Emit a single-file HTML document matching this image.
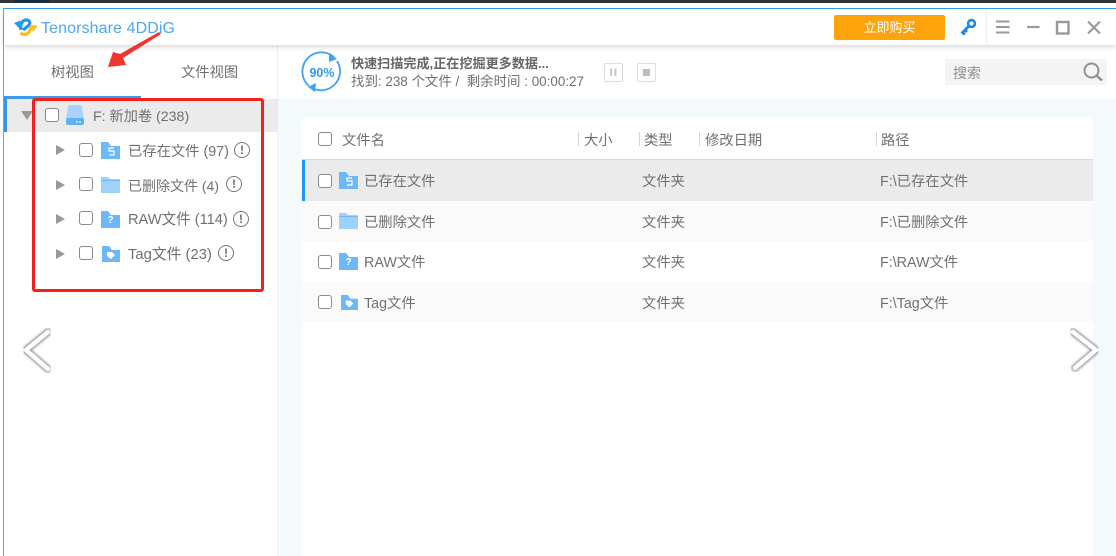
<!DOCTYPE html>
<html><head><meta charset="utf-8">
<style>
html,body{margin:0;padding:0;background:#fff}
#r{position:relative;width:1116px;height:556px;overflow:hidden;background:#fff;font-family:"Liberation Sans","Noto Sans CJK SC",sans-serif;color:#666}
.a{position:absolute}
.t{position:absolute;white-space:nowrap;font-size:14.3px;line-height:20px;color:#707070;margin-top:1px}
.cb{position:absolute;width:12px;height:12px;border:1.5px solid #8a8a8a;border-radius:3px;background:#fff}
.tri{position:absolute;width:0;height:0;border-left:9px solid #999;border-top:5px solid transparent;border-bottom:5px solid transparent}
.ex{position:absolute;width:14px;height:14px;border:1.5px solid #777;border-radius:50%;text-align:center;font-size:12px;font-weight:bold;line-height:14px;color:#6e6e6e}
</style></head><body>
<div id="r">
<svg width="0" height="0" style="position:absolute"><filter id="b"><feGaussianBlur stdDeviation="1.3"/></filter></svg>
<div class="a" style="left:0;top:0;width:1116px;height:3px;background:#333"></div>
<div class="a" style="left:14px;top:0;width:36px;height:3px;background:#1d2c3a"></div>
<div class="a" style="left:3px;top:8px;width:1113px;height:548px;background:#f4fafb"></div>
<div class="a" style="left:3px;top:8px;width:1113px;height:1.5px;background:#3b9de8"></div>
<div class="a" style="left:3px;top:8px;width:1px;height:548px;background:#66a6dc"></div>
<!-- title bar -->
<div class="a" style="left:4px;top:9px;width:1112px;height:36px;background:#fff;box-shadow:0 2px 5px rgba(0,0,0,.16);z-index:3"></div>
<svg class="a" style="left:13px;top:15px;z-index:4" width="24" height="24" viewBox="0 0 24 24">
<path d="M1 8L7.5 5.5L7 14Z" fill="#1e9af0"/>
<path d="M8 15C7 10 9 5 13 5C17 5 18 8 15 11C13 13 11 14 10 15" fill="none" stroke="#1e9af0" stroke-width="3.2"/>
<path d="M7.5 18C10 20 14 20 16 17C17.5 15 18 13 19 11" fill="none" stroke="#fbbf24" stroke-width="3.4"/>
<path d="M17 10L25 10.5L20 17Z" fill="#fbbf24"/></svg>
<div class="t" style="left:41px;top:18px;font-size:16px;color:#4aa8f2;z-index:4;letter-spacing:.1px">Tenorshare 4DDiG</div>
<div class="a" style="left:834px;top:15px;width:111px;height:25px;background:#ffa30d;border-radius:2px;z-index:4;color:#fff;font-size:13px;line-height:25px;text-align:center">立即购买</div>
<svg class="a" style="left:958px;top:17px;z-index:4" width="20" height="20" viewBox="0 0 20 20"><circle cx="13.5" cy="6.5" r="3.4" fill="none" stroke="#1e88e5" stroke-width="2.6"/><path d="M11 9L3.5 16.5M4.5 15.5L6.8 17.6M7 13L9 15" stroke="#1e88e5" stroke-width="2.8" fill="none"/></svg>
<div class="a" style="left:986px;top:9px;width:1px;height:36px;background:#eee;z-index:4"></div>
<svg class="a" style="left:994px;top:18px;z-index:4" width="110" height="18" viewBox="0 0 110 18">
<path d="M2 3.5H15.5M2 9H15.5M2 14.5H15.5" stroke="#999" stroke-width="2"/>
<path d="M33 9H45.5" stroke="#999" stroke-width="2.2"/>
<rect x="63" y="4" width="11.5" height="11.5" fill="none" stroke="#999" stroke-width="2.4"/>
<path d="M94 3.5L106 15.5M106 3.5L94 15.5" stroke="#999" stroke-width="2.2"/></svg>
<!-- sidebar -->
<div class="a" style="left:4px;top:45px;width:274px;height:511px;background:#fff"></div>
<div class="a" style="left:277px;top:45px;width:1px;height:511px;background:#efefef"></div>
<div class="t" style="left:51px;top:62px">树视图</div>
<div class="t" style="left:181px;top:62px">文件视图</div>
<div class="a" style="left:4px;top:96px;width:137px;height:3px;background:#3a9cf0"></div>
<div class="a" style="left:4px;top:99px;width:274px;height:33px;background:#ebebeb"></div>
<div class="a" style="left:4px;top:99px;width:3px;height:33px;background:#2f95ee"></div>
<div class="a" style="left:21px;top:111px;border-top:9px solid #999;border-left:6px solid transparent;border-right:6px solid transparent"></div>
<div class="cb" style="left:45px;top:108px"></div>
<svg class="a" style="left:65px;top:104px" width="20" height="22" viewBox="0 0 20 22"><path d="M3 3Q3 1 5 1H15Q17 1 17 3L19 15H1Z" fill="#a8d4fb"/><rect x="1" y="14" width="18" height="7" rx="2" fill="#5eb1f5"/><circle cx="12" cy="18" r=".9" fill="#fff"/><circle cx="15" cy="18" r=".9" fill="#fff"/></svg>
<div class="t" style="left:93px;top:106px;font-size:14.2px">F: 新加卷 (238)</div>

<div class="tri" style="left:56px;top:145px"></div><div class="cb" style="left:79px;top:143px"></div>
<svg class="a" style="left:101px;top:142px" width="19" height="17" viewBox="0 0 19 17"><path d="M0 0H7L10 4H19V17H0Z" fill="#6cb8f8"/><path d="M13 6H8V9H13V13H8" stroke="#fff" stroke-width="1.2" fill="none"/></svg>
<div class="t" style="left:128px;top:141px">已存在文件 (97)</div><div class="ex" style="left:234px;top:142px">!</div>

<div class="tri" style="left:56px;top:180px"></div><div class="cb" style="left:79px;top:177px"></div>
<svg class="a" style="left:101px;top:177px" width="19" height="16" viewBox="0 0 19 16"><path d="M0 0H7L9 2H19V16H0Z" fill="#9ed2fb"/><path d="M0 3H19V4H0Z" fill="#6cb8f8"/></svg>
<div class="t" style="left:128px;top:175px;font-size:14px">已删除文件 (4)</div><div class="ex" style="left:226px;top:176px">!</div>

<div class="tri" style="left:56px;top:214px"></div><div class="cb" style="left:79px;top:211px"></div>
<svg class="a" style="left:101px;top:211px" width="19" height="17" viewBox="0 0 19 17"><path d="M0 0H7L10 4H19V17H0Z" fill="#6cb8f8"/></svg>
<div class="a" style="left:101px;top:213px;width:19px;text-align:center;color:#fff;font-size:10px;line-height:15px;font-weight:bold">?</div>
<div class="t" style="left:128px;top:209px;font-size:14.6px">RAW文件 (114)</div><div class="ex" style="left:233px;top:211px">!</div>

<div class="tri" style="left:56px;top:249px"></div><div class="cb" style="left:79px;top:246px"></div>
<svg class="a" style="left:102px;top:246px" width="18" height="16" viewBox="0 0 18 16"><path d="M0 0H7L10 4H18V16H0Z" fill="#6cb8f8"/><path d="M5 6H10L13 9L9 13L5 10Z" fill="#fff"/></svg>
<div class="t" style="left:128px;top:244px;font-size:14.8px">Tag文件 (23)</div><div class="ex" style="left:218px;top:245px">!</div>

<!-- red box + arrow -->
<div class="a" style="left:32px;top:98px;width:226px;height:188px;border:3px solid #f5201a;border-radius:3px"></div>
<svg class="a" style="left:105px;top:28px;z-index:5" width="60" height="42" viewBox="0 0 60 42"><path d="M54 4L56 6L18 30L21 37L3 39L8 24L15 26Z" fill="#f0352c"/></svg>
<!-- arrows -->
<svg class="a" style="left:15px;top:322px" width="45" height="56" viewBox="0 0 45 56"><path d="M33 10L11 28L33 47" fill="none" stroke="#666" stroke-width="7" stroke-linecap="round" filter="url(#b)" opacity=".75"/><path d="M33 10L11 28L33 47" fill="none" stroke="#fff" stroke-width="4.5" stroke-linecap="round"/></svg>
<svg class="a" style="left:1060px;top:322px;z-index:5" width="45" height="56" viewBox="0 0 45 56"><path d="M13 10L36 28L15 46" fill="none" stroke="#666" stroke-width="7" stroke-linecap="round" filter="url(#b)" opacity=".75"/><path d="M13 10L36 28L15 46" fill="none" stroke="#fff" stroke-width="4.5" stroke-linecap="round"/></svg>
<!-- status bar -->
<div class="a" style="left:278px;top:45px;width:838px;height:53px;background:#fff"></div>
<svg class="a" style="left:301px;top:50px" width="42" height="43" viewBox="0 0 42 43"><path d="M8 36A19 19 0 0 1 33 7" fill="none" stroke="#3ba2f5" stroke-width="1.8"/><path d="M28 3L36 9L28 12Z" fill="#3ba2f5"/><path d="M36 11A19 19 0 0 1 11 38" fill="none" stroke="#3ba2f5" stroke-width="1.8"/><path d="M15 33L7 37L14 42Z" fill="#3ba2f5"/><text x="21" y="27" text-anchor="middle" font-size="12.5" font-weight="bold" fill="#2f9bf0" font-family="Liberation Sans">90%</text></svg>
<div class="t" style="left:351px;top:53px;font-size:13.1px;font-weight:bold;color:#666">快速扫描完成,正在挖掘更多数据...</div>
<div class="t" style="left:351px;top:71px;font-size:13.45px">找到: 238 个文件 /&nbsp; 剩余时间 : 00:00:27</div>
<div class="a" style="left:604px;top:63px;width:17px;height:17px;border:1px solid #ddd;border-radius:2px"></div>
<svg class="a" style="left:604px;top:63px" width="19" height="19"><path d="M7 5.5V13M11.5 5.5V13" stroke="#c4c4c4" stroke-width="1.8"/></svg>
<div class="a" style="left:637px;top:63px;width:17px;height:17px;border:1px solid #ddd;border-radius:2px"></div>
<div class="a" style="left:643px;top:69px;width:7px;height:7px;background:#bdbdbd"></div>
<div class="a" style="left:945px;top:59px;width:162px;height:26px;background:#f4f4f4;border-radius:2px"></div>
<div class="t" style="left:953px;top:62px;font-size:14px;color:#8f8f8f">搜索</div>
<svg class="a" style="left:1082px;top:62px" width="22" height="20" viewBox="0 0 22 20"><circle cx="9.5" cy="8.5" r="7" fill="none" stroke="#8f8f8f" stroke-width="1.9"/><path d="M14.5 13.5L20 18.5" stroke="#8f8f8f" stroke-width="2.4"/></svg>
<!-- table -->
<div class="a" style="left:302px;top:118px;width:791px;height:438px;background:#fff;border-radius:4px 4px 0 0"></div>
<div class="a" style="left:302px;top:159px;width:791px;height:1px;background:#d8d8d8"></div>
<div class="cb" style="left:318px;top:132px"></div>
<div class="t" style="left:342px;top:130px">文件名</div>
<div class="a" style="left:578px;top:132px;width:1px;height:14px;background:#d5d5d5"></div><div class="t" style="left:584px;top:130px">大小</div>
<div class="a" style="left:639px;top:132px;width:1px;height:14px;background:#d5d5d5"></div><div class="t" style="left:644px;top:130px">类型</div>
<div class="a" style="left:699px;top:132px;width:1px;height:14px;background:#d5d5d5"></div><div class="t" style="left:705px;top:130px">修改日期</div>
<div class="a" style="left:876px;top:132px;width:1px;height:14px;background:#d5d5d5"></div><div class="t" style="left:881px;top:130px">路径</div>

<div class="a" style="left:302px;top:160px;width:791px;height:41px;background:#ebebeb"></div>
<div class="a" style="left:302px;top:160px;width:3px;height:41px;background:#1e96f5"></div>
<div class="a" style="left:302px;top:201px;width:791px;height:40px;background:#fafafa"></div>
<div class="a" style="left:302px;top:282px;width:791px;height:40px;background:#fafafa"></div>

<div class="cb" style="left:318px;top:174px"></div>
<svg class="a" style="left:339px;top:172px" width="19" height="17" viewBox="0 0 19 17"><path d="M0 0H7L10 4H19V17H0Z" fill="#6cb8f8"/><path d="M13 6H8V9H13V13H8" stroke="#fff" stroke-width="1.2" fill="none"/></svg>
<div class="t" style="left:364px;top:171px">已存在文件</div><div class="t" style="left:642px;top:171px">文件夹</div><div class="t" style="left:880px;top:171px">F:\已存在文件</div>

<div class="cb" style="left:318px;top:215px"></div>
<svg class="a" style="left:339px;top:213px" width="19" height="16" viewBox="0 0 19 16"><path d="M0 0H7L9 2H19V16H0Z" fill="#9ed2fb"/><path d="M0 3H19V4H0Z" fill="#6cb8f8"/></svg>
<div class="t" style="left:364px;top:212px">已删除文件</div><div class="t" style="left:642px;top:212px">文件夹</div><div class="t" style="left:880px;top:212px">F:\已删除文件</div>

<div class="cb" style="left:318px;top:255px"></div>
<svg class="a" style="left:339px;top:253px" width="19" height="17" viewBox="0 0 19 17"><path d="M0 0H7L10 4H19V17H0Z" fill="#6cb8f8"/></svg>
<div class="a" style="left:339px;top:255px;width:19px;text-align:center;color:#fff;font-size:10px;line-height:15px;font-weight:bold">?</div>
<div class="t" style="left:364px;top:252px">RAW文件</div><div class="t" style="left:642px;top:252px">文件夹</div><div class="t" style="left:880px;top:252px">F:\RAW文件</div>

<div class="cb" style="left:318px;top:295px"></div>
<svg class="a" style="left:341px;top:295px" width="17" height="15" viewBox="0 0 18 16"><path d="M0 0H7L10 4H18V16H0Z" fill="#6cb8f8"/><path d="M5 6H10L13 9L9 13L5 10Z" fill="#fff"/></svg>
<div class="t" style="left:364px;top:293px">Tag文件</div><div class="t" style="left:642px;top:293px">文件夹</div><div class="t" style="left:880px;top:293px">F:\Tag文件</div>
</div>
</body></html>
